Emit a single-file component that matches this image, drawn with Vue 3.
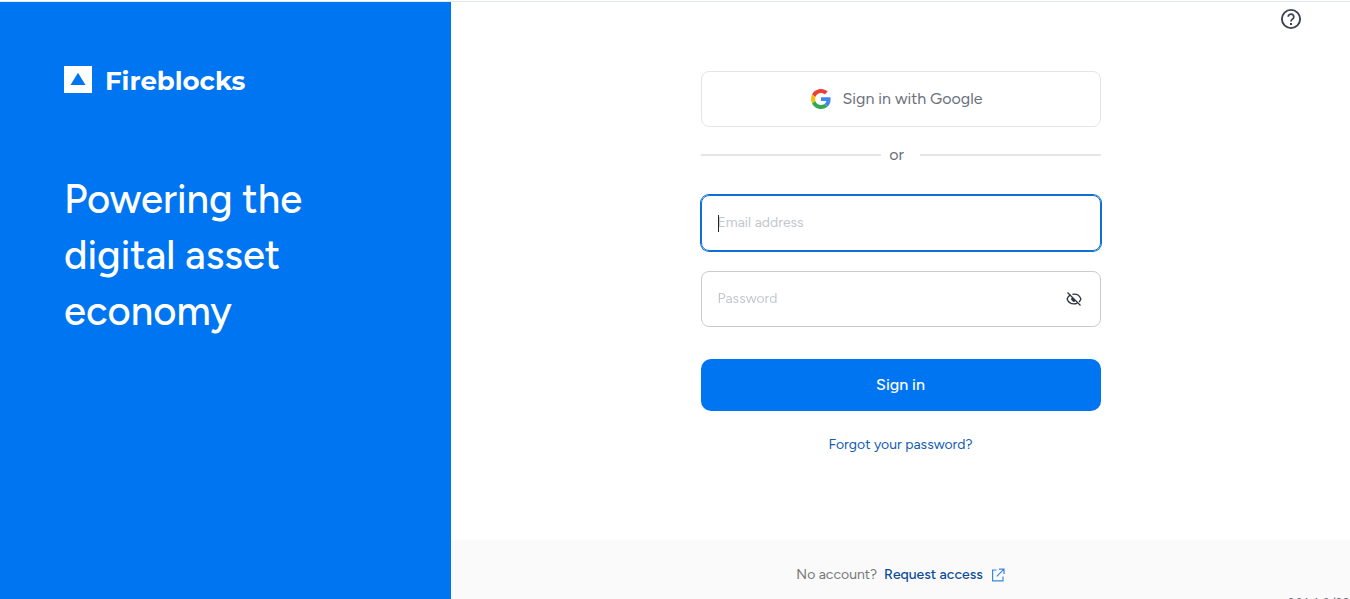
<script setup>
import { ref, onMounted } from 'vue'

const email = ref('')
const password = ref('')
const showPassword = ref(false)
const emailInput = ref(null)

onMounted(() => emailInput.value.focus())
</script>

<template>
  <div class="page">
    <aside class="brand">
      <div class="logo">
        <svg class="logo-mark" viewBox="0 0 28 27" aria-hidden="true">
          <path d="M0 0h28v27H0z" fill="#fff" />
          <path d="M14 6.800l7.500 12.200h-15z" fill="#0075f2" />
        </svg>
        <span class="logo-name">Fireblocks</span>
      </div>
      <h1 class="tagline">Powering the<br />digital asset<br />economy</h1>
    </aside>

    <main class="content">
      <button class="help" type="button" aria-label="Help">
        <svg viewBox="0 0 24 24" aria-hidden="true" fill="none" stroke="#3b4150">
          <circle cx="12" cy="12" r="9.100" stroke-width="1.900" />
          <path d="M9.200 9.800a2.800 2.700 0 1 1 4.400 2.200c-1 .8-1.600 1.200-1.600 2.400" stroke-width="1.800" />
          <path d="M11 16h2v2h-2z" fill="#3b4150" stroke="none" />
        </svg>
      </button>

      <form class="form" @submit.prevent>
        <button class="google" type="button">
          <svg class="google-icon" viewBox="0 0 48 48" aria-hidden="true">
            <path fill="#ea4335" d="M24 9.500c3.540 0 6.710 1.220 9.210 3.600l6.850-6.850C35.900 2.380 30.470 0 24 0 14.620 0 6.510 5.380 2.560 13.220l7.980 6.190C12.430 13.720 17.740 9.500 24 9.500z" />
            <path fill="#4285f4" d="M46.980 24.550c0-1.570-.15-3.090-.38-4.550H24v9.020h12.940c-.58 2.960-2.260 5.480-4.780 7.180l7.730 6c4.510-4.180 7.090-10.360 7.090-17.650z" />
            <path fill="#fbbc05" d="M10.530 28.590c-.48-1.450-.76-2.990-.76-4.590s.27-3.140.76-4.590l-7.980-6.190C.92 16.460 0 20.120 0 24c0 3.880.92 7.540 2.560 10.780l7.970-6.190z" />
            <path fill="#34a853" d="M24 48c6.480 0 11.930-2.130 15.890-5.810l-7.730-6c-2.150 1.450-4.920 2.300-8.160 2.300-6.260 0-11.570-4.220-13.470-9.910l-7.980 6.190C6.510 42.620 14.620 48 24 48z" />
          </svg>
          <span>Sign in with Google</span>
        </button>

        <div class="divider"><span>or</span></div>

        <div class="field field-active">
          <input ref="emailInput" v-model="email" type="email" placeholder="Email address" aria-label="Email address" />
          <span v-if="!email" class="caret" aria-hidden="true"></span>
        </div>

        <div class="field">
          <input v-model="password" :type="showPassword ? 'text' : 'password'" placeholder="Password" aria-label="Password" />
          <button class="eye" type="button" aria-label="Toggle password visibility" @click="showPassword = !showPassword">
            <svg viewBox="0 0 16 16" fill="none" stroke="#30343f" stroke-width="1.300" aria-hidden="true">
              <path d="M4.600 3.900C3 4.700 1.700 6.200 1.100 8c1 2.900 3.700 4.900 6.900 4.900 1.200 0 2.300-.3 3.300-.8M6.400 3.300C6.900 3.200 7.400 3.100 8 3.100c3.200 0 5.900 2 6.900 4.900-.4 1.100-1 2.100-1.900 2.900" />
              <path d="M5.900 7a2.300 2.300 0 0 0 3.100 3.100z" fill="#30343f" stroke-width="1" />
              <path d="M1.500 1.500l13 13" />
            </svg>
          </button>
        </div>

        <button class="submit" type="submit">Sign in</button>
        <a class="forgot" href="#">Forgot your password?</a>
      </form>

      <footer class="footer">
        <span>No account?</span>
        <a class="request" href="#">
          Request access
          <svg viewBox="0 0 14 14" fill="none" stroke="#3b86dc" stroke-width="1.200" aria-hidden="true">
            <path d="M5.500 2H1.600v10.800H12V8.500M8 1.200h5V6M13 1.200L5.800 8.400" />
          </svg>
        </a>
      </footer>
      <span class="version">201.4.0/22</span>
    </main>
  </div>
</template>

<style>
body {
  background: #fff;
  overflow: hidden;
}
</style>

<style scoped>
.page {
  box-sizing: border-box;
  display: flex;
  min-height: 100vh;
  padding-top: 1px;
  background: linear-gradient(#dfebed, #dfebed) 0 1px / 100% 1px no-repeat;
  padding-top: 2px;
  font-family: Figtree, Lato, "Liberation Sans", sans-serif;
  font-size: 16px;
  color: #6b707b;
}

.page *,
.page *::before,
.page *::after {
  box-sizing: border-box;
}

button,
input {
  font: inherit;
}

.brand {
  flex: 0 0 33.41%;
  padding: 64px;
  background: #0075f2;
  color: #fff;
}

.logo {
  display: flex;
  align-items: flex-start;
  gap: 13px;
}

.logo-mark {
  width: 28px;
  height: 27px;
}

.logo-name {
  font: 700 26px/30px Montserrat, Inter, sans-serif;
}

.tagline {
  margin: 75px 0 0;
  font-size: 40px;
  font-weight: 500;
  line-height: 56px;
}

.content {
  position: relative;
  flex: 1;
  min-width: 0;
  display: flex;
  flex-direction: column;
  align-items: center;
}

.help {
  position: absolute;
  top: 5px;
  right: 47px;
  width: 24px;
  height: 24px;
  padding: 0;
  border: 0;
  background: none;
}

.help svg,
.eye svg {
  display: block;
  width: 100%;
  height: 100%;
}

.form {
  width: 100%;
  max-width: 400px;
  padding-top: 69px;
  display: flex;
  flex-direction: column;
}

.google {
  display: flex;
  align-items: center;
  justify-content: center;
  gap: 12px;
  height: 56px;
  padding: 0 8px 1px 0;
  border: 1px solid #e4e5e8;
  border-radius: 8px;
  background: #fff;
  color: #6b707b;
}

.google-icon {
  width: 20px;
  height: 20px;
}

.divider {
  display: flex;
  align-items: center;
  margin: 16px 0 28px;
  line-height: 24px;
}

.divider::before,
.divider::after {
  content: "";
  flex: 1;
  height: 2px;
  background: #e4e5e8;
}

.divider span {
  padding: 0 16px 0 8px;
}

.field {
  position: relative;
  display: flex;
  align-items: center;
  height: 56px;
  margin-bottom: 20px;
  padding: 0 16px;
  border: 1px solid #c9cbcf;
  border-radius: 8px;
}

.field-active {
  border-color: #0f6fd6;
  box-shadow: 0 0 0 1px #0f6fd6;
}

.field input {
  flex: 1;
  min-width: 0;
  padding: 0;
  border: 0;
  outline: 0;
  background: none;
  color: #30343f;
  caret-color: transparent;
  font-size: 14px;
  line-height: 20px;
}

.field input::placeholder {
  color: #c3c8cd;
  opacity: 1;
}

.caret {
  position: absolute;
  left: 16px;
  top: 19px;
  width: 1px;
  height: 17px;
  background: #20242c;
}

.eye {
  width: 16px;
  height: 16px;
  margin-right: 2px;
  padding: 0;
  border: 0;
  background: none;
}

.submit {
  height: 52px;
  margin-top: 12px;
  padding: 0 0 2px;
  border: 0;
  border-radius: 10px;
  background: #0075f2;
  color: #fff;
  font-weight: 500;
}

.forgot {
  align-self: center;
  margin: 24px 0;
  color: #135caf;
  font-size: 14px;
  line-height: 20px;
  text-decoration: none;
}

.footer {
  align-self: stretch;
  display: flex;
  justify-content: center;
  gap: 7px;
  margin-top: auto;
  padding: 25px 0 14px;
  background: #fafafa;
  color: #777;
  font-size: 14px;
  line-height: 20px;
}

.request {
  display: flex;
  align-items: center;
  gap: 8px;
  color: #0b4a94;
  font-weight: 500;
  text-decoration: none;
}

.request svg {
  width: 14px;
  height: 14px;
}

.version {
  position: absolute;
  right: 0;
  bottom: -13px;
  font-size: 13px;
  line-height: 16px;
}
</style>
